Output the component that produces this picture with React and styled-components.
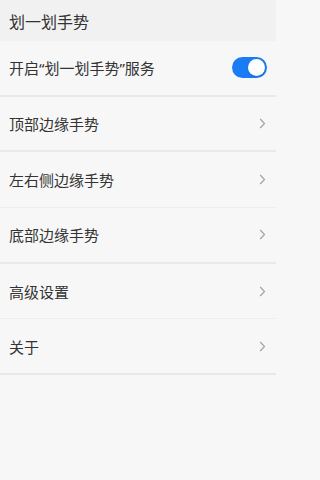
import React, { useState } from 'react';
import styled, { createGlobalStyle } from 'styled-components';

const GlobalStyle = createGlobalStyle`
  html, body {
    margin: 0;
    padding: 0;
    background: #f7f7f7;
  }
  body {
    font-family: "Noto Sans", "Noto Sans CJK SC", sans-serif;
    -webkit-font-smoothing: antialiased;
  }
`;

const Page = styled.div`
  width: 276px;
  min-height: 480px;
  background: #f7f7f7;
  display: flex;
  flex-direction: column;
`;

const Header = styled.div`
  height: 41px;
  background: #f1f1f1;
  display: flex;
  align-items: center;
  padding: 0 9px;
  box-sizing: border-box;
  font-size: 16px;
  color: #333;
`;

const Row = styled.div`
  height: 55.7px;
  box-sizing: border-box;
  display: flex;
  align-items: center;
  justify-content: space-between;
  padding: 0 10px 0 9px;
  border-bottom: ${p => (p.$group ? '2px solid #e9e9e9' : '1px solid #eeeeee')};
  font-size: 15px;
  color: #333;
`;

const Toggle = styled.button`
  width: 35px;
  height: 21px;
  border-radius: 11px;
  border: none;
  padding: 0;
  background: ${p => (p.$on ? '#1a7cf5' : '#d6d6d6')};
  display: flex;
  align-items: center;
  justify-content: ${p => (p.$on ? 'flex-end' : 'flex-start')};
  cursor: pointer;
  margin-right: -1px;

  &::after {
    content: '';
    width: 17px;
    height: 17px;
    margin: 0 2px;
    border-radius: 50%;
    background: #fff;
    box-shadow: 0 1px 2px rgba(0, 0, 0, 0.15);
  }
`;

const Chevron = () => (
  <svg width="7" height="11" viewBox="0 0 7 11" fill="none">
    <path d="M1.2 1 L5.5 5.5 L1.2 10" stroke="#a3a3a3" strokeWidth="1.2" />
  </svg>
);

const items = [
  { label: '顶部边缘手势', group: true },
  { label: '左右侧边缘手势' },
  { label: '底部边缘手势', group: true },
  { label: '高级设置' },
  { label: '关于', group: true },
];

export default function App() {
  const [on, setOn] = useState(true);
  return (
    <Page>
      <GlobalStyle />
      <Header>划一划手势</Header>
      <Row $group>
        <span>开启“划一划手势”服务</span>
        <Toggle $on={on} onClick={() => setOn(!on)} aria-label="toggle" />
      </Row>
      {items.map(item => (
        <Row key={item.label} $group={item.group}>
          <span>{item.label}</span>
          <Chevron />
        </Row>
      ))}
    </Page>
  );
}
